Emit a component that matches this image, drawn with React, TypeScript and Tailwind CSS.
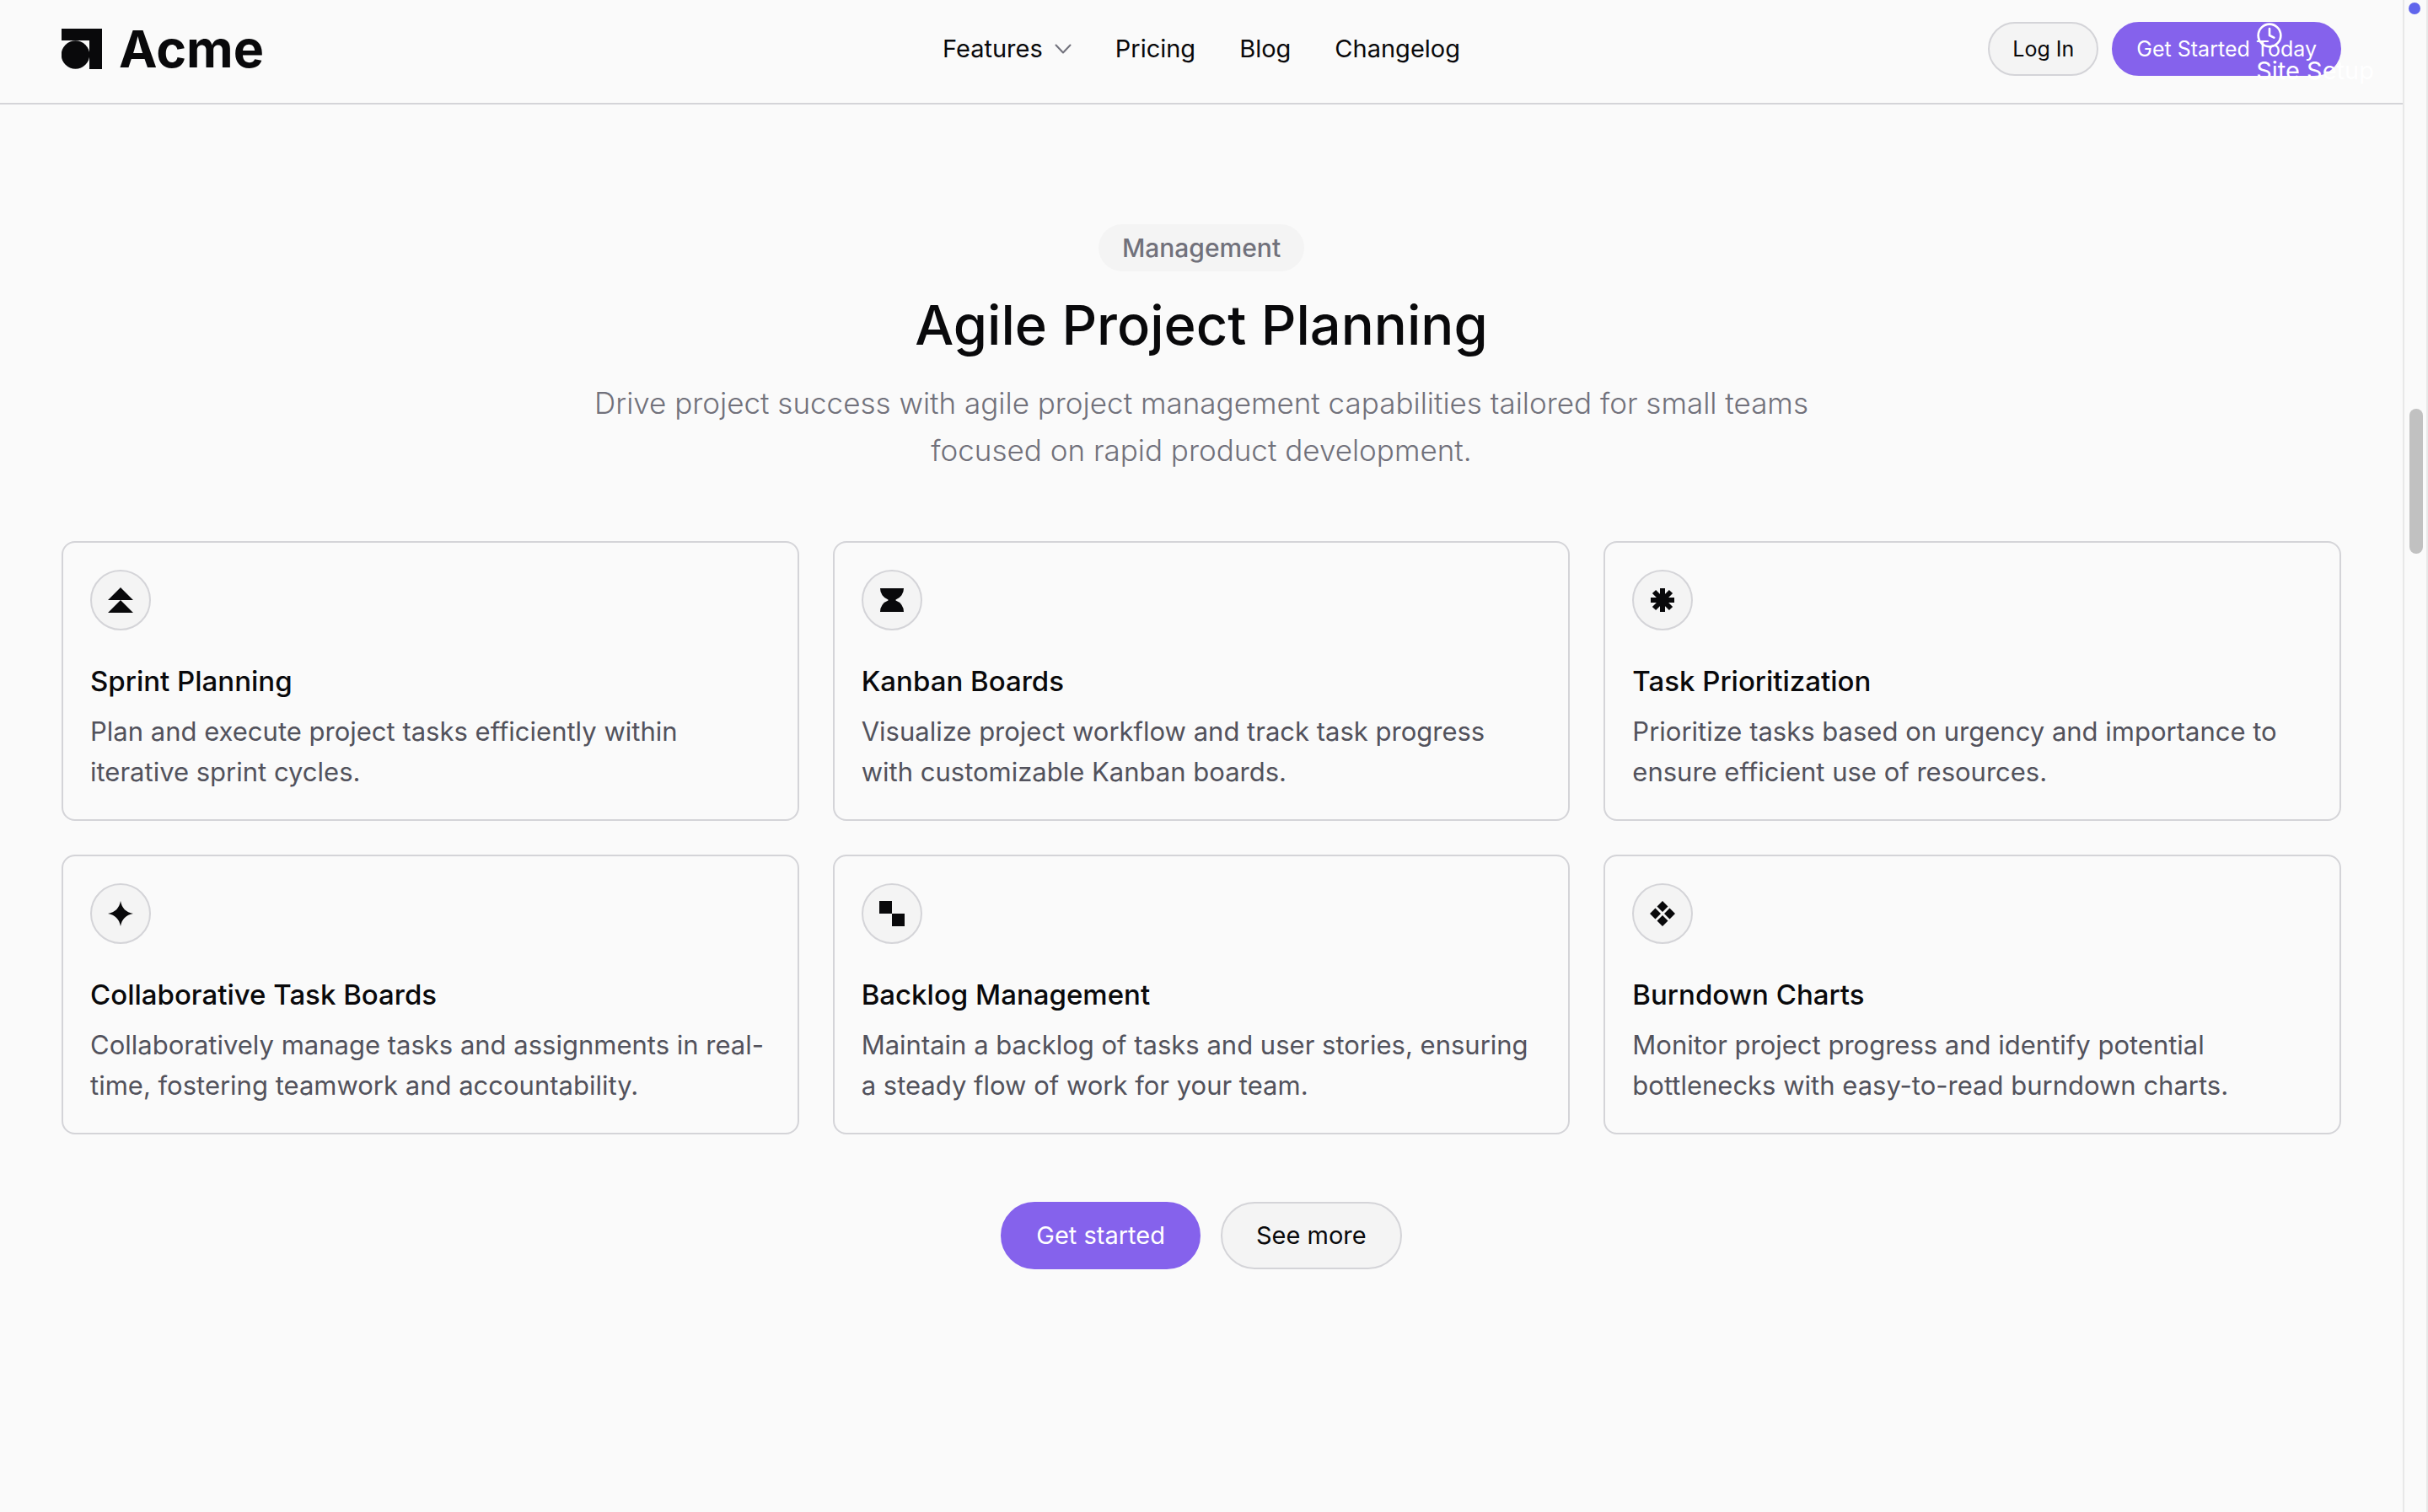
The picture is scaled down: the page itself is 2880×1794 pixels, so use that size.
import type { ReactNode } from "react";
import { Clock } from "lucide-react";

type Feature = { title: string; text: string; icon: ReactNode };

const features: Feature[] = [
  {
    title: "Sprint Planning",
    text: "Plan and execute project tasks efficiently within iterative sprint cycles.",
    icon: <path d="M16 1 31 16H1ZM16 16 31 31H1Z" />,
  },
  {
    title: "Kanban Boards",
    text: "Visualize project workflow and track task progress with customizable Kanban boards.",
    icon: <path d="M2 2h28a14 14 0 0 1-9.500 13.500v1A14 14 0 0 1 30 30H2a14 14 0 0 1 9.500-13.500v-1A14 14 0 0 1 2 2Z" />,
  },
  {
    title: "Task Prioritization",
    text: "Prioritize tasks based on urgency and importance to ensure efficient use of resources.",
    icon: (
      <path
        fill="none"
        stroke="currentColor"
        strokeWidth="6"
        d="M16 2v28M2 16h28M6 6l20 20M26 6 6 26"
      />
    ),
  },
  {
    title: "Collaborative Task Boards",
    text: "Collaboratively manage tasks and assignments in real-time, fostering teamwork and accountability.",
    icon: <path d="M16 1C17.500 9.500 22.500 14.500 31 16 22.500 17.500 17.500 22.500 16 31 14.500 22.500 9.500 17.500 1 16 9.500 14.500 14.500 9.500 16 1Z" />,
  },
  {
    title: "Backlog Management",
    text: "Maintain a backlog of tasks and user stories, ensuring a steady flow of work for your team.",
    icon: <path d="M1 1h15v15H1ZM16 16h15v15H16Z" />,
  },
  {
    title: "Burndown Charts",
    text: "Monitor project progress and identify potential bottlenecks with easy-to-read burndown charts.",
    icon: (
      <path d="M16 1l6.500 6.500L16 14 9.500 7.500ZM7.500 9.500 14 16l-6.500 6.500L1 16ZM24.500 9.500 31 16l-6.500 6.500L18 16ZM16 18l6.500 6.500L16 31l-6.500-6.500Z" />
    ),
  },
];

function Header() {
  return (
    <header className="grid grid-cols-[1fr_auto_1fr] items-center border-b-2 border-zinc-300 px-[73px] pt-[26px] pb-8">
      <a href="#home" className="flex items-center gap-5 justify-self-start">
        <svg viewBox="0 0 48 48" className="size-12" fill="currentColor" aria-hidden="true">
          <path d="M0 0h48v48H33V14H0Z" />
          <circle cx="16.500" cy="31" r="16.750" />
        </svg>
        <span className="text-[61px] leading-[64px] font-bold">Acme</span>
      </a>
      <nav className="flex items-center gap-[52px] text-[29px] leading-10">
        <button type="button" className="flex items-center gap-[14px]">
          Features
          <svg
            viewBox="0 0 20 12"
            className="h-3 w-5 text-zinc-500"
            fill="none"
            stroke="currentColor"
            strokeWidth="2"
            strokeLinecap="round"
            strokeLinejoin="round"
            aria-hidden="true"
          >
            <path d="m1.500 1.500 8.500 9 8.500-9" />
          </svg>
        </button>
        <a href="#pricing">Pricing</a>
        <a href="#blog">Blog</a>
        <a href="#changelog">Changelog</a>
      </nav>
      <div className="flex items-center gap-4 justify-self-end text-[25px] leading-[60px]">
        <button type="button" className="rounded-full border-2 border-zinc-300 bg-[#f4f4f4] px-[27px]">
          Log In
        </button>
        <button type="button" className="rounded-full border-2 border-[#8562ec] bg-[#8562ec] px-[27px] text-white">
          Get Started Today
        </button>
      </div>
    </header>
  );
}

function Card({ title, text, icon }: Feature) {
  return (
    <article className="rounded-2xl border-2 border-zinc-300 p-8">
      <div className="flex size-[72px] items-center justify-center rounded-full border-2 border-zinc-300 bg-[#f4f4f4]">
        <svg viewBox="0 0 32 32" className="size-8" fill="currentColor" aria-hidden="true">
          {icon}
        </svg>
      </div>
      <h3 className="mt-8 text-[33px] leading-[56px] font-medium">{title}</h3>
      <p className="mt-2 text-[31px] leading-[48px] text-zinc-600">{text}</p>
    </article>
  );
}

export default function App() {
  return (
    <div className="relative flex min-h-screen bg-[#fafafa] font-['Inter',sans-serif] text-zinc-950">
      <div className="min-w-0 flex-1">
        <Header />
        <main className="flex flex-col items-center px-[73px] pt-[142px]">
          <p className="rounded-full bg-[#f4f4f4] px-7 text-[30px] leading-[56px] font-medium text-zinc-500">
            Management
          </p>
          <h2 className="mt-6 text-[65px] leading-[80px] font-medium">Agile Project Planning</h2>
          <p className="mt-6 max-w-[1536px] text-center text-[35px] leading-[56px] font-light text-zinc-500">
            Drive project success with agile project management capabilities tailored for small teams
            focused on rapid product development.
          </p>
          <section className="mt-20 grid w-full grid-cols-3 gap-10">
            {features.map((f) => (
              <Card key={f.title} {...f} />
            ))}
          </section>
          <div className="mt-20 flex gap-6 text-[29px] leading-[76px]">
            <button type="button" className="rounded-full border-2 border-[#8562ec] bg-[#8562ec] px-10 text-white">
              Get started
            </button>
            <button type="button" className="rounded-full border-2 border-zinc-300 bg-[#f4f4f4] px-10">
              See more
            </button>
          </div>
        </main>
      </div>
      <aside className="w-[30px] border-x-2 border-[#e8e8e8] pt-[3px]">
        <div className="ml-[5px] size-[14px] rounded-full bg-[#6065ec]" />
        <div className="mt-[468px] ml-[6px] h-[172px] w-4 rounded-full bg-[#c1c1c1]" />
      </aside>
      <div className="absolute top-[26px] right-16 text-white">
        <Clock className="size-8" strokeWidth={2} aria-hidden="true" />
        <p className="text-[29px] leading-[52px]">Site Setup</p>
      </div>
    </div>
  );
}
